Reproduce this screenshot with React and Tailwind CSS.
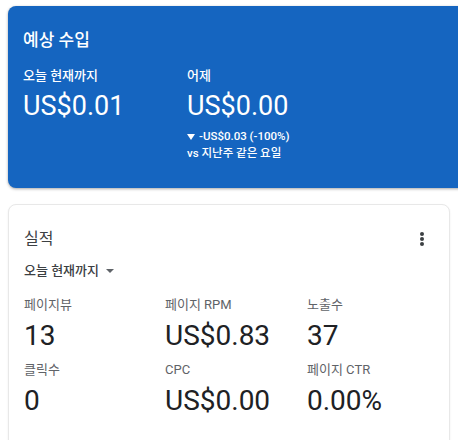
import { useState } from 'react'

const font = { fontFamily: 'Roboto, "Noto Sans CJK KR", sans-serif' }

const stats = [
  { label: '페이지뷰', value: '13' },
  { label: '페이지 RPM', value: 'US$0.83' },
  { label: '노출수', value: '37' },
  { label: '클릭수', value: '0' },
  { label: 'CPC', value: 'US$0.00' },
  { label: '페이지 CTR', value: '0.00%' },
]

const App = () => {
  const [range] = useState('오늘 현재까지')

  return (
    <div className="w-[458px] h-[440px] overflow-hidden bg-white" style={font}>
      {/* 예상 수입 */}
      <div className="ml-[8px] mt-[6px] w-[470px] h-[182px] rounded-[8px] bg-[#1565c0] shadow-[0_1px_3px_rgba(0,0,0,0.35)] text-white px-[15px] pt-[22px]">
        <h2 className="text-[17px] leading-[24px] font-medium">예상 수입</h2>
        <div className="flex mt-[15px]">
          <div className="w-[164px]">
            <div className="text-[13px] leading-[18px] font-medium">오늘 현재까지</div>
            <div className="text-[27px] leading-[34px] mt-[4px]">US$0.01</div>
          </div>
          <div>
            <div className="text-[13px] leading-[18px] font-medium">어제</div>
            <div className="text-[27px] leading-[34px] mt-[4px]">US$0.00</div>
            <div className="text-[11.5px] leading-[17px] font-medium mt-[5px]">
              <div className="flex items-center gap-[4px]">
                <svg width="8" height="8" viewBox="0 0 8 8" className="fill-white">
                  <path d="M0 1h8L4 7z" />
                </svg>
                -US$0.03 (-100%)
              </div>
              <div>vs 지난주 같은 요일</div>
            </div>
          </div>
        </div>
      </div>

      {/* 실적 */}
      <div className="mx-[8px] mt-[16px] h-[260px] rounded-[8px] bg-white border border-[#e8e8e8] shadow-[0_1px_2px_rgba(0,0,0,0.08)] px-[15px] pt-[22px]">
        <div className="flex items-center justify-between">
          <h2 className="text-[16px] leading-[24px] text-[#3c4043]">실적</h2>
          <svg width="6" height="16" viewBox="0 0 6 16" className="mr-[9px] fill-[#3c4043]">
            <circle cx="3" cy="3" r="2" />
            <circle cx="3" cy="8" r="2" />
            <circle cx="3" cy="13" r="2" />
          </svg>
        </div>
        <div className="flex items-center gap-[6px] mt-[10px] text-[13px] leading-[20px] text-[#3c4043] font-medium">
          {range}
          <svg width="10" height="10" viewBox="0 0 10 10" className="fill-[#5f6368]">
            <path d="M1 3h8L5 7z" />
          </svg>
        </div>
        <div className="grid grid-cols-[141px_142px_1fr] mt-[15px] gap-y-[9px]">
          {stats.map((s) => (
            <div key={s.label}>
              <div className="text-[13px] leading-[18px] text-[#5f6368]">{s.label}</div>
              <div className="text-[28px] leading-[32px] mt-[6px] text-[#202124]">{s.value}</div>
            </div>
          ))}
        </div>
      </div>
    </div>
  )
}

export default App
